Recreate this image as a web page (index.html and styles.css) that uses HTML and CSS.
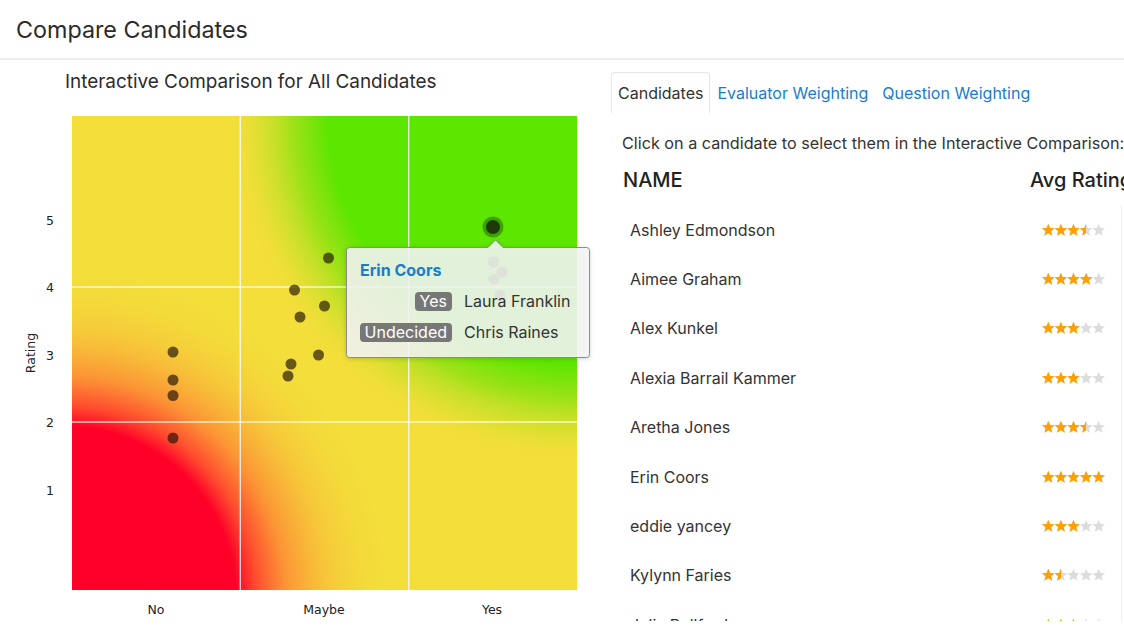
FILE: index.html
```html
<!DOCTYPE html>
<html lang="en">
<head>
<meta charset="utf-8">
<title>Compare Candidates</title>
<link rel="stylesheet" href="styles.css">
</head>
<body>
<svg class="defs" width="0" height="0" aria-hidden="true">
  <defs>
    <path id="star" d="M6.3 -0.2 L8.05 4.0 L12.6 4.3 L9.1 7.25 L10.25 11.7 L6.3 9.25 L2.35 11.7 L3.5 7.25 L0 4.3 L4.55 4.0 Z"/>
    <g id="stars5">
      <use href="#star" x="0"/>
      <use href="#star" x="12.6"/>
      <use href="#star" x="25.2"/>
      <use href="#star" x="37.8"/>
      <use href="#star" x="50.4"/>
    </g>
  </defs>
</svg>

<header class="page-header">
  <h1 class="page-title">Compare Candidates</h1>
</header>

<main class="layout">
  <section class="chart-panel">
    <h2 class="chart-title">Interactive Comparison for All Candidates</h2>
    <div class="chart">
      <svg class="chart-svg" width="600" height="530" viewBox="0 100 600 530">
        <defs>
          <radialGradient id="gRed" gradientUnits="userSpaceOnUse" cx="64" cy="598" r="330">
            <stop offset="0" stop-color="#ff0028"/>
            <stop offset="0.52" stop-color="#ff0028"/>
            <stop offset="0.58" stop-color="#ff4a2e"/>
            <stop offset="0.67" stop-color="#fc8f35" stop-opacity="0.95"/>
            <stop offset="0.8" stop-color="#f9b739" stop-opacity="0.6"/>
            <stop offset="1" stop-color="#f3df3a" stop-opacity="0"/>
          </radialGradient>
          <radialGradient id="gGreen" gradientUnits="userSpaceOnUse" cx="580" cy="112" r="350">
            <stop offset="0" stop-color="#5ce600"/>
            <stop offset="0.72" stop-color="#5ce600"/>
            <stop offset="0.82" stop-color="#98e215" stop-opacity="0.95"/>
            <stop offset="0.92" stop-color="#d0e02c" stop-opacity="0.6"/>
            <stop offset="1" stop-color="#f3df3a" stop-opacity="0"/>
          </radialGradient>
        </defs>

        <rect x="72" y="116" width="505" height="474" fill="#f3de3a"/>
        <rect x="72" y="116" width="505" height="474" fill="url(#gGreen)"/>
        <rect x="72" y="116" width="505" height="474" fill="url(#gRed)"/>

        <g class="grid">
          <line x1="240.3" y1="116" x2="240.3" y2="590"/>
          <line x1="408.7" y1="116" x2="408.7" y2="590"/>
          <line x1="72" y1="287" x2="577" y2="287"/>
          <line x1="72" y1="422" x2="577" y2="422"/>
        </g>

        <g class="ticks">
          <text x="50" y="220">5</text>
          <text x="50" y="287.5">4</text>
          <text x="50" y="355">3</text>
          <text x="50" y="422.5">2</text>
          <text x="50" y="490">1</text>
          <text x="156" y="609">No</text>
          <text x="324" y="609">Maybe</text>
          <text x="492" y="609">Yes</text>
          <text x="30" y="353" transform="rotate(-90 30 353)">Rating</text>
        </g>

        <g class="dots">
          <circle cx="173" cy="352" r="5.5"/>
          <circle cx="173" cy="380" r="5.5"/>
          <circle cx="173" cy="395.5" r="5.5"/>
          <circle cx="173" cy="438" r="5.5"/>
          <circle cx="328.5" cy="258" r="5.5"/>
          <circle cx="294.5" cy="290" r="5.5"/>
          <circle cx="324.5" cy="306" r="5.5"/>
          <circle cx="300" cy="317" r="5.5"/>
          <circle cx="318.5" cy="355" r="5.5"/>
          <circle cx="291" cy="364" r="5.5"/>
          <circle cx="288" cy="376" r="5.5"/>
          <circle cx="493.5" cy="262" r="5.5"/>
          <circle cx="502" cy="272" r="5.5"/>
          <circle cx="494" cy="279" r="5.5"/>
          <circle cx="500" cy="295" r="5.5"/>
        </g>
        <circle cx="493" cy="227" r="10.5" class="sel-halo"/>
        <circle cx="493" cy="227" r="7" class="sel-dot"/>
      </svg>

      <div class="tooltip">
        <svg class="tooltip-shape" width="244" height="111" viewBox="0 0 244 111" aria-hidden="true">
          <path d="M3.5 0.5 H142 L149.5 -7 L157 0.5 H240.5 Q243.5 0.5 243.5 3.5 V107.5 Q243.5 110.5 240.5 110.5 H3.5 Q0.5 110.5 0.5 107.5 V3.5 Q0.5 0.5 3.5 0.5 Z"/>
        </svg>
        <div class="tooltip-name">Erin Coors</div>
        <div class="tooltip-rows">
          <span class="badge">Yes</span><span class="tooltip-eval">Laura Franklin</span>
          <span class="badge">Undecided</span><span class="tooltip-eval">Chris Raines</span>
        </div>
      </div>
    </div>
  </section>

  <section class="list-panel">
    <nav class="tabs">
      <span class="tab tab-active">Candidates</span>
      <span class="tab">Evaluator Weighting</span>
      <span class="tab">Question Weighting</span>
    </nav>
    <p class="hint">Click on a candidate to select them in the Interactive Comparison:</p>
    <div class="table-head">
      <span>NAME</span>
      <span>Avg Rating</span>
    </div>
    <div class="rows">
      <div class="row"><span class="name">Ashley Edmondson</span><span class="stars"><svg class="stars-svg" width="63" height="12" viewBox="0 0 63 12"><use href="#stars5"/></svg><span class="stars-fill" style="width:70%"><svg class="stars-svg" width="63" height="12" viewBox="0 0 63 12"><use href="#stars5"/></svg></span></span></div>
      <div class="row"><span class="name">Aimee Graham</span><span class="stars"><svg class="stars-svg" width="63" height="12" viewBox="0 0 63 12"><use href="#stars5"/></svg><span class="stars-fill" style="width:80%"><svg class="stars-svg" width="63" height="12" viewBox="0 0 63 12"><use href="#stars5"/></svg></span></span></div>
      <div class="row"><span class="name">Alex Kunkel</span><span class="stars"><svg class="stars-svg" width="63" height="12" viewBox="0 0 63 12"><use href="#stars5"/></svg><span class="stars-fill" style="width:60%"><svg class="stars-svg" width="63" height="12" viewBox="0 0 63 12"><use href="#stars5"/></svg></span></span></div>
      <div class="row"><span class="name">Alexia Barrail Kammer</span><span class="stars"><svg class="stars-svg" width="63" height="12" viewBox="0 0 63 12"><use href="#stars5"/></svg><span class="stars-fill" style="width:60%"><svg class="stars-svg" width="63" height="12" viewBox="0 0 63 12"><use href="#stars5"/></svg></span></span></div>
      <div class="row"><span class="name">Aretha Jones</span><span class="stars"><svg class="stars-svg" width="63" height="12" viewBox="0 0 63 12"><use href="#stars5"/></svg><span class="stars-fill" style="width:70%"><svg class="stars-svg" width="63" height="12" viewBox="0 0 63 12"><use href="#stars5"/></svg></span></span></div>
      <div class="row"><span class="name">Erin Coors</span><span class="stars"><svg class="stars-svg" width="63" height="12" viewBox="0 0 63 12"><use href="#stars5"/></svg><span class="stars-fill" style="width:100%"><svg class="stars-svg" width="63" height="12" viewBox="0 0 63 12"><use href="#stars5"/></svg></span></span></div>
      <div class="row"><span class="name">eddie yancey</span><span class="stars"><svg class="stars-svg" width="63" height="12" viewBox="0 0 63 12"><use href="#stars5"/></svg><span class="stars-fill" style="width:60%"><svg class="stars-svg" width="63" height="12" viewBox="0 0 63 12"><use href="#stars5"/></svg></span></span></div>
      <div class="row"><span class="name">Kylynn Faries</span><span class="stars"><svg class="stars-svg" width="63" height="12" viewBox="0 0 63 12"><use href="#stars5"/></svg><span class="stars-fill" style="width:30%"><svg class="stars-svg" width="63" height="12" viewBox="0 0 63 12"><use href="#stars5"/></svg></span></span></div>
      <div class="row"><span class="name">Julia Bellford</span><span class="stars"><svg class="stars-svg" width="63" height="12" viewBox="0 0 63 12"><use href="#stars5"/></svg><span class="stars-fill" style="width:60%"><svg class="stars-svg" width="63" height="12" viewBox="0 0 63 12"><use href="#stars5"/></svg></span></span></div>
    </div>
  </section>
</main>
</body>
</html>
```

FILE: styles.css
```css
html, body {
  margin: 0;
  padding: 0;
  width: 1124px;
  height: 636px;
  overflow: hidden;
  background: #ffffff;
}

body {
  font-family: Inter, "Noto Sans", "Liberation Sans", sans-serif;
  color: #333333;
}

.defs {
  position: absolute;
  width: 0;
  height: 0;
}

.page-header {
  height: 58px;
  border-bottom: 2px solid #ededed;
  display: flex;
  align-items: center;
  padding-left: 16px;
}

.page-title {
  margin: 0;
  font-size: 23.3px;
  font-weight: 400;
  line-height: 28px;
  color: #2b2b2b;
  padding-top: 1px;
}

.layout {
  display: flex;
  width: 1124px;
  overflow: hidden;
}

.chart-panel {
  flex: none;
  width: 600px;
  padding-top: 11px;
}

.chart-title {
  margin: 0;
  padding-left: 65px;
  font-size: 18.9px;
  font-weight: 400;
  line-height: 22px;
  color: #2b2b2b;
}

.chart {
  position: relative;
  margin-top: 7px;
  width: 600px;
  height: 530px;
}

.chart-svg {
  display: block;
}

.grid line {
  stroke: rgba(255, 255, 255, 0.78);
  stroke-width: 1.4;
}

.ticks text {
  font-family: "DejaVu Sans", "Liberation Sans", sans-serif;
  font-size: 12.5px;
  fill: #222222;
  text-anchor: middle;
  dominant-baseline: central;
}

.dots circle {
  fill: rgba(30, 18, 4, 0.66);
}

.sel-halo {
  fill: rgba(20, 80, 0, 0.45);
}

.sel-dot {
  fill: #1e3a0c;
}

.tooltip {
  position: absolute;
  left: 346px;
  top: 147px;
  width: 244px;
  height: 111px;
  box-sizing: border-box;
  padding: 13px 14px 0 14px;
}

.tooltip-shape {
  position: absolute;
  left: 0;
  top: 0;
  overflow: visible;
  filter: drop-shadow(0 1px 2px rgba(0, 0, 0, 0.18));
}

.tooltip-shape path {
  fill: rgba(247, 247, 247, 0.88);
  stroke: #8c8c8c;
  stroke-width: 1;
}

.tooltip-name {
  position: relative;
  font-size: 16px;
  font-weight: 700;
  line-height: 20px;
  color: #1a7ccc;
}

.tooltip-rows {
  position: relative;
  margin-top: 10px;
  display: grid;
  grid-template-columns: 92px auto;
  column-gap: 12px;
  row-gap: 9px;
  align-items: center;
}

.badge {
  justify-self: end;
  background: #777777;
  color: #ffffff;
  font-size: 16px;
  line-height: 19px;
  padding: 0 5px;
  border-radius: 4px;
}

.tooltip-eval {
  font-size: 16px;
  line-height: 22px;
  color: #333333;
}

.list-panel {
  flex: none;
  width: 560px;
  margin-left: 11px;
  padding-top: 12px;
}

.tabs {
  display: flex;
}

.tab {
  padding: 10px 6px;
  font-size: 16px;
  line-height: 20px;
  color: #1a7ccc;
  border: 1px solid transparent;
  border-bottom: none;
  border-radius: 4px 4px 0 0;
}

.tab-active {
  color: #333333;
  border-color: #e6e6e6;
}

.hint {
  margin: 20px 0 0 11px;
  font-size: 16.2px;
  line-height: 20px;
  white-space: nowrap;
  color: #333333;
}

.table-head {
  margin-top: 15px;
  display: grid;
  grid-template-columns: 407px auto;
  padding-left: 12px;
  font-size: 20px;
  font-weight: 500;
  line-height: 24px;
  color: #222222;
  white-space: nowrap;
}

.rows {
  margin-top: 13px;
  width: 510px;
  height: 416px;
  overflow: hidden;
  border-right: 1px solid #efefef;
}

.row {
  height: 49.4px;
  display: grid;
  grid-template-columns: 412px auto;
  align-items: center;
  padding-left: 19px;
}

.name {
  font-size: 16px;
  line-height: 20px;
  color: #333333;
}

.stars {
  position: relative;
  width: 63px;
  height: 12px;
  display: block;
}

.stars-svg {
  display: block;
  overflow: visible;
  fill: #dcdcdc;
}

.stars-fill {
  position: absolute;
  left: 0;
  top: 0;
  height: 12px;
  overflow: hidden;
}

.stars-fill .stars-svg {
  fill: #ff9f00;
}
```
